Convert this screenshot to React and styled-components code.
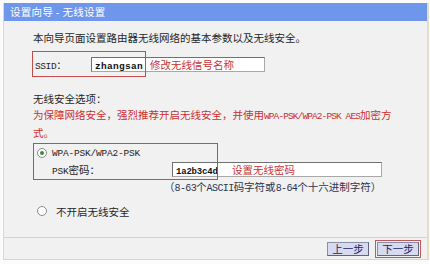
import React from 'react';
import styled, { createGlobalStyle } from 'styled-components';

const GlobalStyle = createGlobalStyle`
  html, body {
    margin: 0;
    padding: 0;
    background: #fbfbfb;
  }
  body {
    font-family: "Noto Sans CJK SC", "Liberation Sans", sans-serif;
    font-size: 10.5px;
    color: #262626;
  }
`;

const Panel = styled.div`
  width: 423px;
  margin: 3px 0 0 3px;
  border-left: 1px solid #e6d7b8;
  border-right: 2px solid #e8dcc2;
  border-bottom: 1px solid #e6d2b0;
  background: #f1f1f1;
`;

const TitleBar = styled.div`
  height: 18px;
  background: #6e97ec;
  color: #fff;
  line-height: 18px;
  padding-left: 6px;
  letter-spacing: 0.3px;
`;

const Body = styled.div`
  height: 207px;
  padding: 9px 0 0 29px;
  border-bottom: 1px solid #e6d2b0;
`;

const Line = styled.div`
  line-height: 16px;
  height: ${p => p.$lines * 16}px;
  margin-top: ${p => p.$top || 0}px;
  margin-left: ${p => p.$left || 0}px;
  color: ${p => p.$color || '#262626'};
  white-space: nowrap;
`;

const Mono = styled.span`
  font-family: "Liberation Mono", monospace;
  font-size: ${p => p.$size || 9.5}px;
  letter-spacing: ${p => p.$ls ?? -0.7}px;
  font-weight: ${p => (p.$bold ? 700 : 400)};
`;

const FieldRow = styled.div`
  position: relative;
  display: flex;
  align-items: center;
  height: 26px;
  margin-top: 5px;
`;

const Mark = styled.div`
  position: absolute;
  left: ${p => p.$l}px;
  top: ${p => p.$t}px;
  width: ${p => p.$w}px;
  height: ${p => p.$h}px;
  border: 1px solid #c04c4c;
  box-sizing: border-box;
  pointer-events: none;
`;

const Label = styled.span`
  width: ${p => p.$w}px;
  padding-left: ${p => p.$pad || 0}px;
  box-sizing: border-box;
  flex-shrink: 0;
  white-space: nowrap;
`;

const TextBox = styled.div`
  width: ${p => p.$w}px;
  height: 15px;
  box-sizing: border-box;
  border: 1px solid #707070;
  border-right-color: #a8a8a8;
  border-bottom-color: #a8a8a8;
  background: #fff;
  display: flex;
  align-items: center;
  padding-left: 3px;
  flex-shrink: 0;
`;

const Value = styled.span`
  width: ${p => p.$w}px;
  flex-shrink: 0;
  color: #111;
`;

const Note = styled.span`
  color: #cc3333;
  margin-left: 4px;
  white-space: nowrap;
`;

const OptionBlock = styled.div`
  position: relative;
  margin-top: 4px;
  padding: 2px 0;
`;

const OptionRow = styled.div`
  display: flex;
  align-items: center;
  height: ${p => p.$h}px;
  margin-top: ${p => p.$top || 0}px;
  padding-left: ${p => p.$pad || 0}px;
`;

const Radio = styled.span`
  width: 10px;
  height: 10px;
  margin-left: 4px;
  margin-right: ${p => p.$gap}px;
  border-radius: 50%;
  border: 1px solid #8a8a8a;
  background: #fff;
  box-sizing: border-box;
  display: flex;
  align-items: center;
  justify-content: center;
  flex-shrink: 0;
  &::after {
    content: '';
    width: 4px;
    height: 4px;
    border-radius: 50%;
    background: ${p => (p.$checked ? '#3d8c3d' : 'transparent')};
  }
`;

const Footer = styled.div`
  height: 21px;
  display: flex;
  justify-content: flex-end;
  align-items: center;
  gap: 8px;
  padding-right: 8px;
`;

const Button = styled.button`
  width: 42px;
  height: 14px;
  padding: 0;
  margin: 0;
  border: 1px solid #8a8fa8;
  border-right-color: #5f6480;
  border-bottom-color: #5f6480;
  background: #d8dbf0;
  color: #1b2466;
  font-family: "Noto Sans CJK SC", sans-serif;
  font-size: 10.5px;
  line-height: 12px;
  outline: ${p => (p.$marked ? '1px solid #c05a5a' : 'none')};
  outline-offset: 1px;
`;

export default function App() {
  return (
    <>
      <GlobalStyle />
      <Panel>
        <TitleBar>设置向导 - 无线设置</TitleBar>
        <Body>
          <Line $lines={1}>本向导页面设置路由器无线网络的基本参数以及无线安全。</Line>

          <FieldRow>
            <Label $w={58} $pad={2}><Mono $ls={-0.4}>SSID</Mono>：</Label>
            <TextBox $w={174}>
              <Value $w={51}><Mono $bold $size={9.5} $ls={0.3}>zhangsan</Mono></Value>
              <Note>修改无线信号名称</Note>
            </TextBox>
            <Mark $l={-1} $t={0} $w={114} $h={26} />
          </FieldRow>

          <Line $lines={1} $top={14}>无线安全选项：</Line>
          <Line $lines={2} $color="#cc3030">
            为保障网络安全，强烈推荐开启无线安全，并使用<Mono $ls={-0.9}>WPA-PSK/WPA2-PSK AES</Mono>加密方
            <br />
            式。
          </Line>

          <OptionBlock>
            <OptionRow $h={16}>
              <Radio $checked $gap={5} />
              <Mono $ls={-0.2}>WPA-PSK/WPA2-PSK</Mono>
            </OptionRow>
            <OptionRow $h={17} $pad={19}>
              <Label $w={120}><Mono $ls={-0.2}>PSK</Mono>密码：</Label>
              <TextBox $w={210}>
                <Value $w={52}><Mono $bold $size={9} $ls={-0.2}>1a2b3c4d</Mono></Value>
                <Note>设置无线密码</Note>
              </TextBox>
            </OptionRow>
            <Mark $l={0} $t={0} $w={185} $h={37} />
          </OptionBlock>

          <Line $lines={1} $top={-1} $left={131} $color="#2a3552">
            （<Mono $size={10} $ls={-0.6}>8-63</Mono>个<Mono $size={10} $ls={-0.6}>ASCII</Mono>码字符或<Mono $size={10} $ls={-0.6}>8-64</Mono>个十六进制字符）
          </Line>

          <OptionRow $h={16} $top={8}>
            <Radio $gap={9} />
            不开启无线安全
          </OptionRow>
        </Body>
        <Footer>
          <Button>上一步</Button>
          <Button $marked>下一步</Button>
        </Footer>
      </Panel>
    </>
  );
}
